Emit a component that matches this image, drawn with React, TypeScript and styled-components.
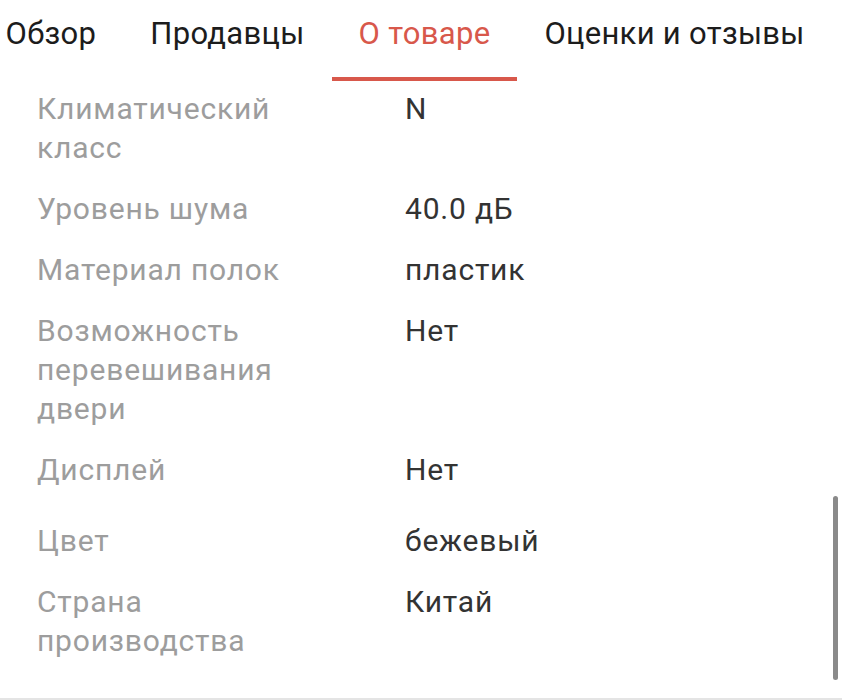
import { createGlobalStyle } from 'styled-components'
import styled from 'styled-components'

const GlobalStyle = createGlobalStyle`
  html, body {
    margin: 0;
    padding: 0;
    background: #fff;
  }
  body {
    font-family: Roboto, 'Noto Sans', sans-serif;
    -webkit-font-smoothing: antialiased;
  }
`

const Screen = styled.div`
  position: relative;
  width: 842px;
  height: 700px;
  overflow: hidden;
  background: #fff;
  border-bottom: 2px solid #e4e4e4;
  box-sizing: border-box;
`

const Tabs = styled.nav`
  display: flex;
  margin-left: -21.5px;
  white-space: nowrap;
`

const Tab = styled.div<{ $active?: boolean }>`
  padding: 13px 27px 0;
  height: 81px;
  box-sizing: border-box;
  font-size: 31px;
  line-height: 42px;
  letter-spacing: 0.3px;
  color: ${p => (p.$active ? '#d8584b' : '#1c1c1c')};
  border-bottom: 4px solid ${p => (p.$active ? '#d8584b' : 'transparent')};
`

const Specs = styled.div`
  display: flex;
  flex-direction: column;
  gap: 22px;
  padding: 8px 0 0 37px;
`

const Row = styled.div<{ $spaced?: boolean }>`
  display: grid;
  grid-template-columns: 368px 1fr;
  margin-top: ${p => (p.$spaced ? '10px' : '0')};
  font-size: 30px;
  line-height: 39px;
  letter-spacing: 0.8px;
`

const Label = styled.div`
  color: #9d9d9d;
  width: 250px;
`

const Value = styled.div`
  color: #333;
`

const Scrollbar = styled.div`
  position: absolute;
  right: 4px;
  top: 496px;
  width: 5px;
  height: 184px;
  border-radius: 3px;
  background: #8a8a8a;
`

const tabs = ['Обзор', 'Продавцы', 'О товаре', 'Оценки и отзывы']

const specs: [string, string][] = [
  ['Климатический класс', 'N'],
  ['Уровень шума', '40.0 дБ'],
  ['Материал полок', 'пластик'],
  ['Возможность перевешивания двери', 'Нет'],
  ['Дисплей', 'Нет'],
  ['Цвет', 'бежевый'],
  ['Страна производства', 'Китай'],
]

export default function App() {
  return (
    <Screen>
      <GlobalStyle />
      <Tabs>
        {tabs.map(t => (
          <Tab key={t} $active={t === 'О товаре'}>
            {t}
          </Tab>
        ))}
      </Tabs>
      <Specs>
        {specs.map(([label, value]) => (
          <Row key={label} $spaced={label === 'Цвет'}>
            <Label>{label}</Label>
            <Value>{value}</Value>
          </Row>
        ))}
      </Specs>
      <Scrollbar />
    </Screen>
  )
}
